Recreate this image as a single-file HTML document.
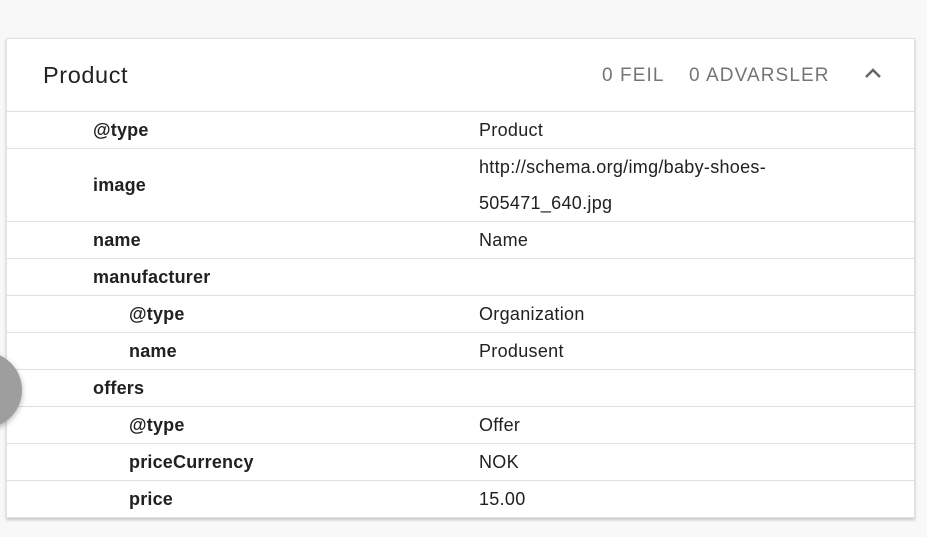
<!DOCTYPE html>
<html><head><style>
body{margin:0;width:927px;height:537px;background:#f8f8f8;overflow:hidden;position:relative;font-family:"Liberation Sans",Arial,sans-serif;}
.card{position:absolute;left:6px;top:38px;width:909px;height:480px;background:#fff;border:1px solid #e0e0e0;box-sizing:border-box;box-shadow:0 2px 3px rgba(0,0,0,.2);}
.title{position:absolute;left:36px;top:23px;font-size:23.5px;color:#222;letter-spacing:.6px;}
.stat{position:absolute;top:26px;font-size:19px;color:#757575;letter-spacing:1.1px;}
.row{position:absolute;left:0;width:907px;border-top:1px solid #e0e0e0;font-size:18px;color:#212121;}
.k{position:absolute;font-weight:bold;letter-spacing:.2px;}
.v{position:absolute;left:472px;letter-spacing:.3px;}
.circle{position:absolute;left:-54px;top:352px;width:76px;height:76px;border-radius:50%;background:#9e9e9e;box-shadow:0 2px 6px rgba(0,0,0,.3);}
</style></head><body>
<div class="card">
<div class="title">Product</div>
<div class="stat" style="left:595px">0 FEIL</div>
<div class="stat" style="left:682px">0 ADVARSLER</div>
<svg style="position:absolute;left:857px;top:28px" width="18" height="14" viewBox="0 0 18 14"><path d="M2 10 L9 3 L16 10" stroke="#666" stroke-width="2.5" fill="none"/></svg>
<div class="row" style="top:72px;height:37px"><div class="k" style="left:86px;top:8px">@type</div><div class="v" style="top:8px">Product</div></div>
<div class="row" style="top:109px;height:73px"><div class="k" style="left:86px;top:26px">image</div><div class="v" style="top:0px;line-height:36px">http://schema.org/img/baby-shoes-<br>505471_640.jpg</div></div>
<div class="row" style="top:182px;height:37px"><div class="k" style="left:86px;top:8px">name</div><div class="v" style="top:8px">Name</div></div>
<div class="row" style="top:219px;height:37px"><div class="k" style="left:86px;top:8px">manufacturer</div></div>
<div class="row" style="top:256px;height:37px"><div class="k" style="left:122px;top:8px">@type</div><div class="v" style="top:8px">Organization</div></div>
<div class="row" style="top:293px;height:37px"><div class="k" style="left:122px;top:8px">name</div><div class="v" style="top:8px">Produsent</div></div>
<div class="row" style="top:330px;height:37px"><div class="k" style="left:86px;top:8px">offers</div></div>
<div class="row" style="top:367px;height:37px"><div class="k" style="left:122px;top:8px">@type</div><div class="v" style="top:8px">Offer</div></div>
<div class="row" style="top:404px;height:37px"><div class="k" style="left:122px;top:8px">priceCurrency</div><div class="v" style="top:8px">NOK</div></div>
<div class="row" style="top:441px;height:37px"><div class="k" style="left:122px;top:8px">price</div><div class="v" style="top:8px">15.00</div></div>
</div>
<div class="circle"></div>
</body></html>
